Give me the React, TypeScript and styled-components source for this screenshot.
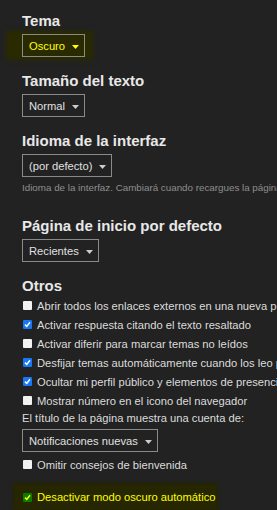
import styled, { createGlobalStyle } from "styled-components";

const Global = createGlobalStyle`
    html, body {
        margin: 0;
        padding: 0;
        background: #222222;
        overflow: hidden;
    }
    body {
        font-family: "Liberation Sans", Arial, sans-serif;
        color: #dddddd;
    }
`;

type Option = { label: string; checked: boolean };

const otros: Option[] = [
    { label: "Abrir todos los enlaces externos en una nueva pestaña", checked: false },
    { label: "Activar respuesta citando el texto resaltado", checked: true },
    { label: "Activar diferir para marcar temas no leídos", checked: false },
    { label: "Desfijar temas automáticamente cuando los leo por completo", checked: true },
    { label: "Ocultar mi perfil público y elementos de presencia", checked: true },
    { label: "Mostrar número en el icono del navegador", checked: false },
];

function Caret() {
    return (
        <svg width="7" height="4" viewBox="0 0 7 4">
            <path d="M0 0 L7 0 L3.5 4 Z" fill="currentColor" />
        </svg>
    );
}

function Check({ checked, highlight }: { checked: boolean; highlight?: boolean }) {
    return (
        <Box $checked={checked} $highlight={highlight}>
            {checked && (
                <svg width="7" height="7" viewBox="0 0 7 7">
                    <path d="M1 3.6 L2.8 5.4 L6 1.3" fill="none" stroke="currentColor" strokeWidth="1.5" />
                </svg>
            )}
        </Box>
    );
}

function App() {
    return (
        <Page>
            <Global />
            <Section>
                <Heading>Tema</Heading>
                <Glow>
                    <Select $highlight>Oscuro <Caret /></Select>
                </Glow>
            </Section>
            <Section>
                <Heading>Tamaño del texto</Heading>
                <Select>Normal <Caret /></Select>
            </Section>
            <Section $gap={22}>
                <Heading>Idioma de la interfaz</Heading>
                <Select>(por defecto) <Caret /></Select>
                <Hint>Idioma de la interfaz. Cambiará cuando recargues la página.</Hint>
            </Section>
            <Section>
                <Heading>Página de inicio por defecto</Heading>
                <Select>Recientes <Caret /></Select>
            </Section>
            <Section>
                <Heading $tight>Otros</Heading>
                {otros.map((o) => (
                    <Row key={o.label}>
                        <Check checked={o.checked} />
                        {o.label}
                    </Row>
                ))}
                <Label>El título de la página muestra una cuenta de:</Label>
                <Select>Notificaciones nuevas <Caret /></Select>
                <Row className="after-select">
                    <Check checked={false} />
                    Omitir consejos de bienvenida
                </Row>
                <GlowRow>
                    <Check checked highlight />
                    Desactivar modo oscuro automático
                </GlowRow>
            </Section>
        </Page>
    );
}

const Page = styled.div`
    width: 277px;
    height: 510px;
    padding: 11px 0 0 22px;
    box-sizing: border-box;
    overflow: hidden;
    white-space: nowrap;
`;

const Section = styled.div<{ $gap?: number }>`
    display: flex;
    flex-direction: column;
    align-items: flex-start;
    margin-bottom: ${({ $gap }) => $gap ?? 14}px;

    .after-select {
        margin-top: 3px;
    }
`;

const Heading = styled.h2<{ $tight?: boolean }>`
    margin: 0 0 ${({ $tight }) => ($tight ? 0 : 3)}px 0;
    font-size: 15px;
    line-height: 20px;
    font-weight: 700;
    color: #e8e8e8;
`;

const Select = styled.div<{ $highlight?: boolean }>`
    display: inline-flex;
    align-items: center;
    gap: 7px;
    height: 23px;
    box-sizing: border-box;
    padding: 0 5px 0 6px;
    border: 1px solid #8a8a8a;
    font-size: 11.2px;
    color: ${({ $highlight }) => ($highlight ? "#ffff00" : "#e0e0e0")};

    svg {
        margin-top: 2px;
        color: ${({ $highlight }) => ($highlight ? "#ffff00" : "#cccccc")};
    }
`;

const Glow = styled.div`
    display: inline-flex;
    background: #2a2a00;
    box-shadow: 0 0 4px 3px #2a2a00;
    margin-left: -13px;
    padding: 0 5px 0 13px;
`;

const Hint = styled.div`
    margin-top: 5px;
    font-size: 9.8px;
    line-height: 12px;
    color: #8e8e8e;
`;

const Row = styled.label`
    display: flex;
    align-items: center;
    gap: 5px;
    height: 19px;
    font-size: 11.2px;
    color: #dcdcdc;
    padding-left: 1px;
`;

const GlowRow = styled(Row)`
    margin-top: 11px;
    margin-left: -7px;
    padding: 0 1px 0 8px;
    height: 24px;
    color: #ffff00;
    background: #262600;
    box-shadow: 0 0 3px 2px #262600;
`;

const Label = styled.div`
    font-size: 11.2px;
    line-height: 17px;
    color: #dcdcdc;
    margin-bottom: 2px;
`;

const Box = styled.span<{ $checked: boolean; $highlight?: boolean }>`
    display: inline-flex;
    align-items: center;
    justify-content: center;
    flex: none;
    width: 9px;
    height: 9px;
    border-radius: 1px;
    box-sizing: border-box;
    background: ${({ $checked, $highlight }) =>
        $highlight ? "#0a7a00" : $checked ? "#1877f2" : "#f2f2f2"};
    color: ${({ $highlight }) => ($highlight ? "#ffff00" : "#ffffff")};
`;

export default App;
